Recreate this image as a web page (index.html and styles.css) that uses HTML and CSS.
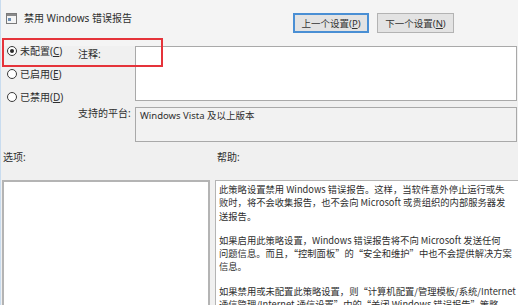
FILE: index.html
```html
<!DOCTYPE html>
<html lang="zh-CN">
<head>
<meta charset="utf-8">
<title>禁用 Windows 错误报告</title>
<link rel="stylesheet" href="styles.css">
</head>
<body>
<div class="window">
  <header class="header">
    <div class="title">
      <svg class="title-icon" width="11" height="11" viewBox="0 0 11 11">
        <rect x="0.5" y="0.5" width="10" height="10" fill="#f4f4f4" stroke="#7a7a7a"/>
        <rect x="1" y="1" width="9" height="2" fill="#8a8a8a"/>
        <rect x="2" y="5" width="3" height="3" fill="#6b8fb5"/>
      </svg>
      <span>禁用 Windows 错误报告</span>
    </div>
    <div class="nav">
      <button class="btn btn-focus">上一个设置(<u>P</u>)</button>
      <button class="btn">下一个设置(<u>N</u>)</button>
    </div>
  </header>

  <section class="settings">
    <div class="radios">
      <label class="radio"><span class="dot checked"></span><span>未配置(<u>C</u>)</span></label>
      <label class="radio"><span class="dot"></span><span>已启用(<u>E</u>)</span></label>
      <label class="radio"><span class="dot"></span><span>已禁用(<u>D</u>)</span></label>
    </div>
    <div class="label label-comment">注释:</div>
    <div class="field comment"></div>
    <div class="label label-platform">支持的平台:</div>
    <div class="field platform">Windows Vista 及以上版本</div>
    <div class="highlight"></div>
  </section>

  <section class="captions">
    <div class="caption caption-options">选项:</div>
    <div class="caption caption-help">帮助:</div>
  </section>

  <section class="panes">
    <div class="pane options"></div>
    <div class="pane help">
      <p><span class="ln">此策略设置禁用 Windows 错误报告。这样，当软件意外停止运行或失</span><span class="ln">败时，将不会收集报告，也不会向 Microsoft 或贵组织的内部服务器发</span><span class="ln">送报告。</span></p>
      <p><span class="ln">如果启用此策略设置，Windows 错误报告将不向 Microsoft 发送任何</span><span class="ln">问题信息。而且，“控制面板”的“安全和维护”中也不会提供解决方案</span><span class="ln">信息。</span></p>
      <p><span class="ln">如果禁用或未配置此策略设置，则“计算机配置/管理模板/系统/Internet</span><span class="ln">通信管理/Internet 通信设置”中的“关闭 Windows 错误报告”策略</span></p>
    </div>
  </section>
</div>
</body>
</html>
```

FILE: styles.css
```css
* { box-sizing: border-box; }

html, body {
  margin: 0;
  padding: 0;
  width: 518px;
  height: 305px;
  overflow: hidden;
  background: #f0f0f0;
  text-autospace: no-autospace;
}

.window {
  width: 518px;
  height: 305px;
  overflow: hidden;
  display: flex;
  flex-direction: column;
  font-family: "Noto Sans", "Noto Sans CJK SC", sans-serif;
  font-size: 10px;
  color: #2e2e2e;
  border-left: 1px solid #c9dcef;
  text-autospace: no-autospace;
}

u { text-decoration: underline; }

.header {
  height: 46px;
  flex: none;
  display: flex;
  align-items: flex-start;
  background: #f4f4f4;
}

.title {
  display: flex;
  align-items: center;
  gap: 7px;
  padding: 11px 0 0 5px;
  line-height: 14px;
}

.title-icon { flex: none; }

.nav {
  display: flex;
  gap: 8px;
  margin: 13px 64px 0 auto;
}

.btn {
  height: 20px;
  width: 77px;
  padding: 0;
  font-family: inherit;
  font-size: 9.5px;
  color: #333;
  background: #e3e3e3;
  border: 1px solid #b3b3b3;
  border-radius: 0;
  text-autospace: no-autospace;
}

.btn-focus {
  border: 2px solid #4a8fd4;
  width: 76px;
}

.settings {
  position: relative;
  flex: none;
  display: grid;
  grid-template-columns: 77px 57px 1fr;
  grid-template-rows: 55px 35px;
  row-gap: 6px;
  padding-right: 1px;
}

.radios {
  grid-column: 1;
  grid-row: 1 / 3;
  display: flex;
  flex-direction: column;
  gap: 11px;
  padding: 0 0 0 6px;
  margin-top: -1px;
}

.radio {
  display: flex;
  align-items: center;
  gap: 3px;
  height: 12px;
  line-height: 12px;
  white-space: nowrap;
}

.dot {
  width: 10px;
  height: 10px;
  border: 1px solid #3a3a3a;
  border-radius: 50%;
  background: #fff;
  position: relative;
  flex: none;
}

.dot.checked::after {
  content: "";
  position: absolute;
  left: 2px;
  top: 2px;
  width: 4px;
  height: 4px;
  border-radius: 50%;
  background: #2a2a2a;
}

.label {
  grid-column: 2;
  line-height: 12px;
  white-space: nowrap;
}

.label-comment { grid-row: 1; padding-top: 2px; }
.label-platform { grid-row: 2; padding-top: 0; }

.field {
  grid-column: 3;
  border: 1px solid #a9a9a9;
}

.comment {
  grid-row: 1;
  background: #ffffff;
}

.platform {
  grid-row: 2;
  background: #f2f2f2;
  padding: 2px 4px;
  line-height: 12px;
  font-size: 9.5px;
}

.highlight {
  position: absolute;
  left: 1px;
  top: -8px;
  width: 161px;
  height: 29px;
  border: 2px solid #e5333a;
  pointer-events: none;
}

.captions {
  flex: none;
  height: 38px;
  display: flex;
  padding-top: 9px;
  line-height: 12px;
}

.caption-options { width: 216px; padding-left: 2px; }

.panes {
  flex: 1;
  display: flex;
  gap: 5px;
  padding-left: 1px;
  min-height: 0;
}

.pane {
  background: #fff;
  border: 2px solid #b4b4b4;
  border-bottom: none;
}

.options { width: 208px; flex: none; }

.help {
  flex: 1;
  border-width: 1px;
  border-right: none;
  padding: 2px 3px;
  font-family: "Noto Sans CJK SC", sans-serif;
  font-size: 9.3px;
  line-height: 13.3px;
  overflow: hidden;
}

.help p { margin: 0 0 11px; }

.ln {
  display: block;
  white-space: nowrap;
}
```
